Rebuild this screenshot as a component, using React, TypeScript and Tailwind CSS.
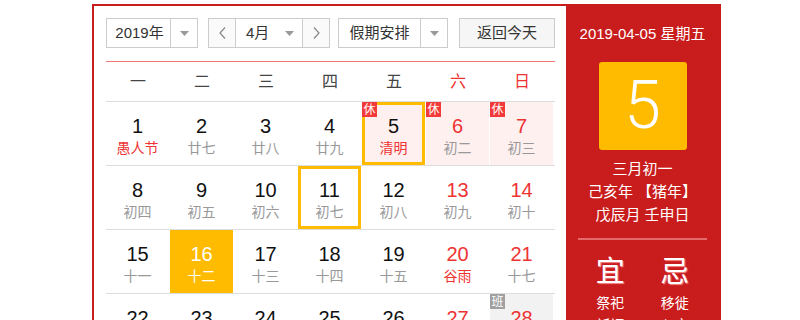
import React from 'react'

type Day = {
  d: number
  l: string
  red?: boolean
  lunarRed?: boolean
  bg?: 'pink' | 'yellow' | 'gray'
  sel?: boolean
  badge?: '休' | '班'
}

const weeks: Day[][] = [
  [
    { d: 1, l: '愚人节', lunarRed: true },
    { d: 2, l: '廿七' },
    { d: 3, l: '廿八' },
    { d: 4, l: '廿九' },
    { d: 5, l: '清明', lunarRed: true, bg: 'pink', sel: true, badge: '休' },
    { d: 6, l: '初二', red: true, bg: 'pink', badge: '休' },
    { d: 7, l: '初三', red: true, bg: 'pink', badge: '休' },
  ],
  [
    { d: 8, l: '初四' },
    { d: 9, l: '初五' },
    { d: 10, l: '初六' },
    { d: 11, l: '初七', sel: true },
    { d: 12, l: '初八' },
    { d: 13, l: '初九', red: true },
    { d: 14, l: '初十', red: true },
  ],
  [
    { d: 15, l: '十一' },
    { d: 16, l: '十二', bg: 'yellow' },
    { d: 17, l: '十三' },
    { d: 18, l: '十四' },
    { d: 19, l: '十五' },
    { d: 20, l: '谷雨', red: true, lunarRed: true },
    { d: 21, l: '十七', red: true },
  ],
  [
    { d: 22, l: '十八' },
    { d: 23, l: '十九' },
    { d: 24, l: '二十' },
    { d: 25, l: '廿一' },
    { d: 26, l: '廿二' },
    { d: 27, l: '廿三', red: true },
    { d: 28, l: '廿四', red: true, bg: 'gray', badge: '班' },
  ],
]

const weekdays = ['一', '二', '三', '四', '五', '六', '日']

function Caret() {
  return (
    <svg width="9" height="5" viewBox="0 0 9 5">
      <path d="M0 0h9L4.5 5z" fill="#999" />
    </svg>
  )
}

function Chevron({ dir }: { dir: 'left' | 'right' }) {
  return (
    <svg width="7" height="12" viewBox="0 0 7 12">
      <path
        d={dir === 'left' ? 'M6 0.5L1 6l5 5.5' : 'M1 0.5L6 6l-5 5.5'}
        fill="none"
        stroke="#888"
        strokeWidth="1.2"
      />
    </svg>
  )
}

function DayCell({ day }: { day: Day }) {
  const bg =
    day.bg === 'pink'
      ? 'bg-[#fff0f0]'
      : day.bg === 'yellow'
        ? 'bg-[#ffbb00]'
        : day.bg === 'gray'
          ? 'bg-[#f2f2f2]'
          : 'bg-white'
  const yellow = day.bg === 'yellow'
  const numColor = yellow ? 'text-white' : day.red ? 'text-[#ee3333]' : 'text-[#111]'
  const lunarColor = yellow ? 'text-white' : day.lunarRed ? 'text-[#ee3333]' : 'text-[#999]'

  return (
    <div className="w-[64px] h-[63px] pr-px">
      <div
        className={`relative h-full flex flex-col items-center ${bg} ${
          day.sel ? 'border-[3px] border-[#ffbb00] pt-[10px]' : 'pt-[13px]'
        }`}
      >
        {day.badge && (
          <span
            className={`absolute ${day.sel ? '-top-[3px] -left-[3px]' : 'top-0 left-0'} w-[15px] h-[15px] flex items-center justify-center text-[12px] leading-none text-white ${
              day.badge === '休' ? 'bg-[#f33a3a]' : 'bg-[#a0a0a0]'
            }`}
          >
            {day.badge}
          </span>
        )}
        <span className={`text-[20px] leading-[22px] ${numColor}`}>{day.d}</span>
        <span className={`mt-px text-[14px] leading-[20px] ${lunarColor}`}>{day.l}</span>
      </div>
    </div>
  )
}

export default function App() {
  return (
    <div
      className="min-h-screen bg-white pt-[4px]"
      style={{ fontFamily: '"Liberation Sans", "Noto Sans CJK SC", sans-serif' }}
    >
      <div className="ml-[92px] w-[629px] border-2 border-[#c91c1c] flex">
        {/* 左侧日历 */}
        <div className="w-[472px] pl-[12px] pt-[12px]">
          <div className="flex h-[30px] text-[15px] text-[#333]">
            <div className="w-[92px] flex border border-[#ccc]">
              <div className="flex-1 flex items-center justify-center pl-[2px]">2019年</div>
              <div className="w-[27px] flex items-center justify-center border-l border-[#ccc]">
                <Caret />
              </div>
            </div>

            <div className="ml-[10px] w-[122px] flex border border-[#ccc]">
              <div className="w-[26px] flex items-center justify-center bg-[#fafafa]">
                <Chevron dir="left" />
              </div>
              <div className="flex-1 flex items-center border-x border-[#ccc] pl-[10px] pr-[8px]">
                <span className="flex-1">4月</span>
                <Caret />
              </div>
              <div className="w-[26px] flex items-center justify-center bg-[#fafafa]">
                <Chevron dir="right" />
              </div>
            </div>

            <div className="ml-[8px] w-[110px] flex border border-[#ccc]">
              <div className="flex-1 flex items-center justify-center">假期安排</div>
              <div className="w-[27px] flex items-center justify-center border-l border-[#ccc]">
                <Caret />
              </div>
            </div>

            <button className="ml-[11px] w-[96px] flex items-center justify-center border border-[#ccc] bg-[#f6f6f6] text-[#333]">
              返回今天
            </button>
          </div>

          <div className="mt-[13px] w-[449px] h-px bg-[#f27676]" />

          <div className="flex h-[39px] items-center">
            {weekdays.map((w, i) => (
              <div
                key={w}
                className={`w-[64px] text-center text-[16px] ${i >= 5 ? 'text-[#ee3333]' : 'text-[#444]'}`}
              >
                {w}
              </div>
            ))}
          </div>

          {weeks.map((week, i) => (
            <div key={i} className="flex w-[449px] border-t border-[#dddddd]">
              {week.map((day) => (
                <DayCell key={day.d} day={day} />
              ))}
            </div>
          ))}
        </div>

        {/* 右侧详情 */}
        <div className="flex-1 bg-[#c91c1c] flex flex-col items-center text-white pt-[18px]">
          <div className="text-[15px] leading-[20px]">2019-04-05 星期五</div>
          <div
            className="mt-[18px] w-[88px] h-[88px] rounded-[3px] bg-[#ffbb00] flex items-center justify-center text-[66px] font-light leading-none"
            style={{ fontFamily: 'Roboto, "Liberation Sans", sans-serif' }}
          >
            5
          </div>
          <div className="mt-[7px] text-[15px] leading-[23px] text-center">
            <div>三月初一</div>
            <div>己亥年 【猪年】</div>
            <div>戊辰月 壬申日</div>
          </div>
          <div className="mt-[12px] w-[129px] h-[2px] bg-[#e56a6a]" />
          <div className="mt-[16px] w-[129px] flex">
            <div className="flex-1 flex flex-col items-center">
              <div className="text-[29px] leading-[32px] [text-shadow:1px_1px_1px_#f58a8a]">宜</div>
              <div className="mt-[4px] text-[14px] leading-[22px] text-center">
                <div>祭祀</div>
                <div>祈福</div>
                <div>求嗣</div>
              </div>
            </div>
            <div className="flex-1 flex flex-col items-center">
              <div className="text-[29px] leading-[32px] [text-shadow:1px_1px_1px_#f58a8a]">忌</div>
              <div className="mt-[4px] text-[14px] leading-[22px] text-center">
                <div>移徙</div>
                <div>入宅</div>
                <div>嫁娶</div>
              </div>
            </div>
          </div>
        </div>
      </div>
    </div>
  )
}
